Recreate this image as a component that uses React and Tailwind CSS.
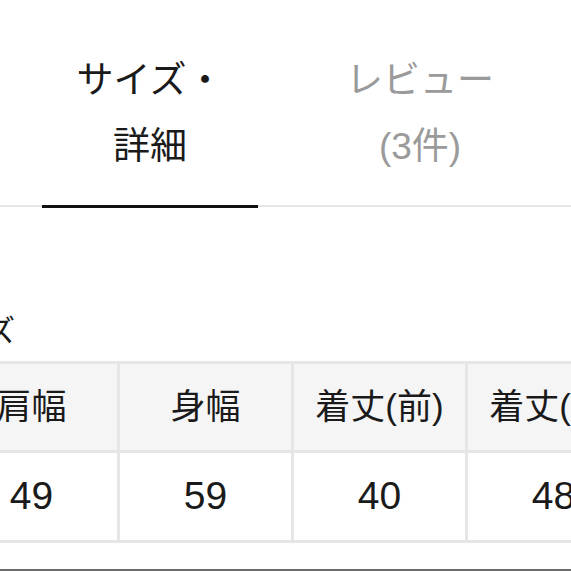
import React from 'react';

const columns = [
  { label: '肩幅', value: '49' },
  { label: '身幅', value: '59' },
  { label: '着丈(前)', value: '40' },
  { label: '着丈(後)', value: '48' },
];

function App() {
  return (
    <div
      className="w-[571px] h-[571px] overflow-hidden bg-white text-[#1a1a1a]"
      style={{ fontFamily: '"Liberation Sans", "Noto Sans CJK JP", sans-serif' }}
    >
      {/* tabs */}
      <div className="flex pt-[48px] pb-[25px]">
        <div className="ml-[42px] w-[216px] shrink-0 text-center text-[37px] leading-[66px]">
          サイズ・
          <br />
          詳細
        </div>
        <div className="w-[324px] shrink-0 text-center text-[37px] leading-[66px] text-[#9a9a9a]">
          レビュー
          <br />
          (3件)
        </div>
      </div>
      <div className="flex h-[3px]">
        <div className="w-[42px] h-[2px] bg-[#e6e6e6]" />
        <div className="w-[216px] h-[3px] bg-[#111]" />
        <div className="flex-1 h-[2px] bg-[#e6e6e6]" />
      </div>

      {/* section title */}
      <div className="mt-[103px] -ml-[74px] text-[30px] leading-[40px] whitespace-nowrap">サイズ</div>

      {/* size table */}
      <div className="mt-[10px] -ml-[57px] w-[800px]">
        <div className="inline-grid grid-cols-[171px_171px_171px_171px] gap-[3px] p-[3px] bg-[#e6e6e6]">
          {columns.map((c) => (
            <div key={c.label} className="h-[86px] flex items-center justify-center bg-[#f5f5f5] text-[35px] whitespace-nowrap">
              {c.label}
            </div>
          ))}
          {columns.map((c) => (
            <div key={c.label + 'v'} className="h-[87px] flex items-center justify-center bg-white text-[39px]">
              {c.value}
            </div>
          ))}
        </div>
      </div>
      <div className="mt-[26px] h-[2px] bg-[#6b6b6b]" />
    </div>
  );
}

export default App;
